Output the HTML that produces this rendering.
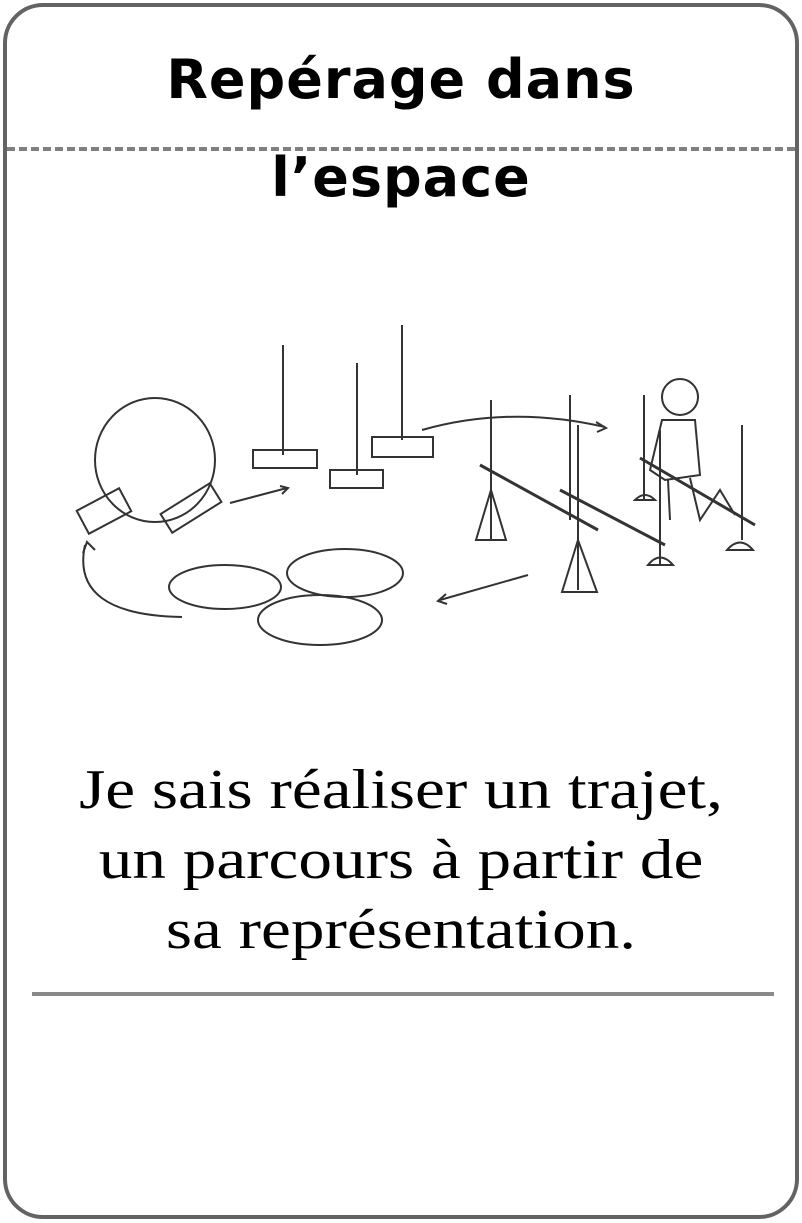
<!DOCTYPE html>
<html><head><meta charset="utf-8"><style>
html,body{margin:0;padding:0;background:#fff;}
body{width:802px;height:1223px;position:relative;overflow:hidden;}
.card{position:absolute;left:3px;top:3px;width:788px;height:1208px;border:4px solid #636363;border-radius:40px;}
.t{position:absolute;left:0;width:802px;text-align:center;font-family:"DejaVu Sans","Liberation Sans",sans-serif;font-weight:bold;font-size:54px;color:#000;letter-spacing:1px;}
.dash{position:absolute;left:7px;top:147px;width:788px;border-top:4px dashed #808080;}
.b{position:absolute;left:0;width:802px;text-align:center;font-family:"Liberation Serif",serif;font-size:56px;color:#000;line-height:70px;top:755px;transform:scaleX(1.2);transform-origin:401px 0;}
.hr{position:absolute;left:32px;top:992px;width:742px;height:4px;background:#8a8a8a;}
</style></head><body>
<div class="card"></div>
<div class="t" style="top:48px">Repérage dans</div>
<div class="dash"></div>
<div class="t" style="top:146px">l’espace</div>
<svg style="position:absolute;left:0;top:0" width="802" height="1223" fill="none" stroke="#333" stroke-width="2">
<ellipse cx="155" cy="460" rx="60" ry="62"/>
<rect x="80" y="498" width="48" height="26" transform="rotate(-28 104 511)"/>
<rect x="162" y="497" width="58" height="22" transform="rotate(-32 191 508)"/>
<line x1="283" y1="345" x2="283" y2="455"/><rect x="253" y="450" width="64" height="18"/>
<line x1="357" y1="363" x2="357" y2="475"/><rect x="330" y="470" width="53" height="18"/>
<line x1="402" y1="325" x2="402" y2="440"/><rect x="372" y="437" width="61" height="20"/>
<path d="M230 503 L287 488"/><path d="M280 486 L288 488 L282 494"/>
<path d="M422 430 Q510 405 605 427"/><path d="M596 422 L606 428 L597 432"/>
<ellipse cx="225" cy="587" rx="56" ry="22"/><ellipse cx="345" cy="573" rx="58" ry="24"/><ellipse cx="320" cy="620" rx="62" ry="25"/>
<path d="M182 617 Q70 615 85 545"/><path d="M83 553 L87 542 L95 550"/>
<path d="M528 575 L440 600"/><path d="M446 594 L438 601 L447 604"/>
<line x1="491" y1="400" x2="491" y2="540"/><path d="M476 540 L491 490 L506 540 Z"/>
<line x1="570" y1="395" x2="570" y2="520"/><line x1="578" y1="425" x2="578" y2="590"/><path d="M562 592 L578 540 L597 592 Z"/>
<line x1="480" y1="465" x2="598" y2="530" stroke-width="3"/><line x1="560" y1="490" x2="665" y2="545" stroke-width="3"/>
<circle cx="680" cy="397" r="18"/>
<path d="M662 420 L650 470 L665 480 L700 475 L695 420 Z"/>
<path d="M668 480 L670 520 M690 478 L700 520 L720 490 L735 515"/>
<line x1="644" y1="395" x2="644" y2="500"/><line x1="660" y1="430" x2="660" y2="565"/><line x1="742" y1="425" x2="742" y2="540"/>
<path d="M648 565 Q660 550 673 565 Z"/><path d="M727 550 Q740 535 753 550 Z"/><path d="M635 500 Q645 490 655 500 Z"/>
<line x1="640" y1="458" x2="755" y2="525" stroke-width="3"/>
</svg>
<div class="b">Je sais réaliser un trajet,<br>un parcours à partir de<br>sa représentation.</div>
<div class="hr"></div>
</body></html>
